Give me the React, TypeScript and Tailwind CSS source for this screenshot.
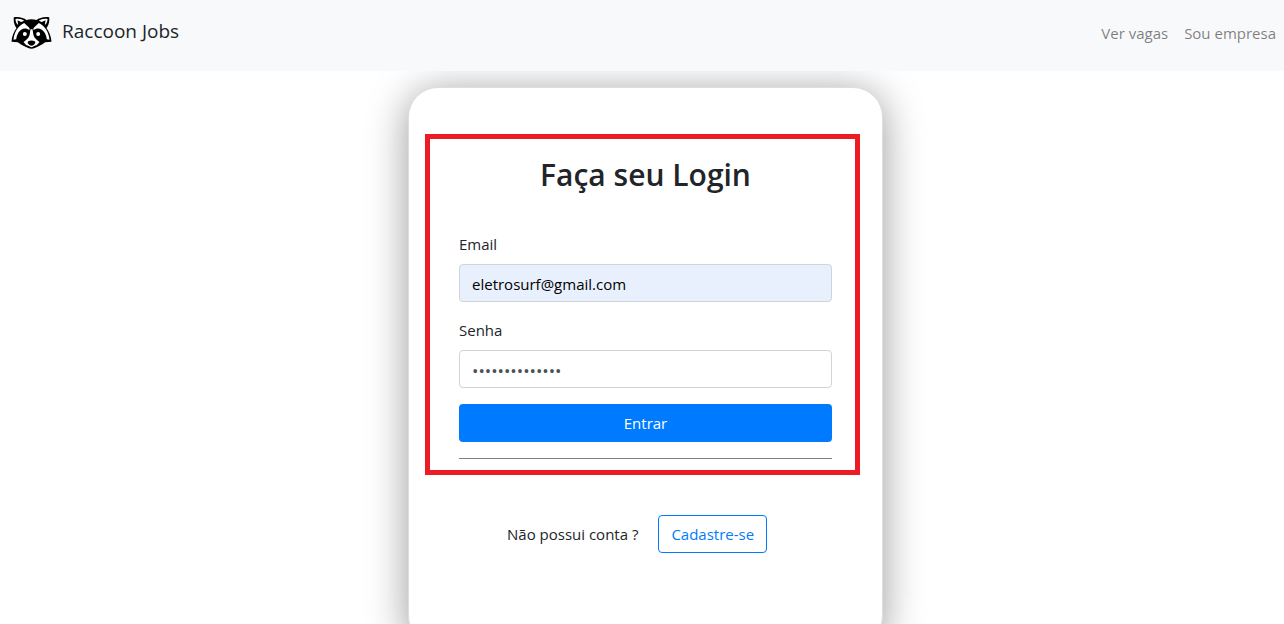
import React from 'react';

function RaccoonLogo() {
  return (
    <svg viewBox="0 0 120 99" className="h-[33px] w-[41px]" aria-hidden="true">
      <path d="M7 4 C22 1 37 6 45 12 Q60 8 75 12 C83 6 98 1 113 4 C115 18 110 30 105 36 C113 48 119 61 120 77 L101 79 C90 88 78 92 70 96 Q60 101 50 96 C42 92 30 88 19 79 L0 77 C1 61 7 48 15 36 C10 30 5 18 7 4Z" fill="#000" />
      <path d="M12 9 C23 7 32 10 38 14 L29 18 L18 13 L20 27 C14 22 12 16 12 9Z" fill="#fff" />
      <path d="M108 9 C97 7 88 10 82 14 L91 18 L102 13 L100 27 C106 22 108 16 108 9Z" fill="#fff" />
      <path d="M38 21 L54 36 L54 43 C43 32 27 38 20 51 Q15 60 14 70 L6 71 C8 48 20 29 38 21Z" fill="#fff" />
      <path d="M82 21 L66 36 L66 43 C77 32 93 38 100 51 Q105 60 106 70 L114 71 C112 48 100 29 82 21Z" fill="#fff" />
      <path d="M57 40 L63 40 L66 58 C69 68 78 73 84 78 Q79 87 68 90 Q60 97 52 90 Q41 87 36 78 C42 73 51 68 54 58Z" fill="#fff" />
      <path d="M50 76 Q60 71 70 76 Q74 82 66 87 Q60 91 54 87 Q46 82 50 76Z" fill="#000" />
      <circle cx="40" cy="54" r="6" fill="#fff" />
      <circle cx="80" cy="54" r="6" fill="#fff" />
    </svg>
  );
}

export default function App() {
  return (
    <div className="h-screen overflow-hidden bg-white font-['Open_Sans','Noto_Sans',sans-serif] text-[15px] leading-6 text-[#212529]">
      <header className="relative z-10 flex h-[71px] items-start justify-between bg-[#f8f9fa] px-2 pt-4">
        <a href="#inicio" className="flex items-start gap-2.5 pl-[3px] text-[19px] leading-[30px]">
          <RaccoonLogo />
          Raccoon Jobs
        </a>
        <nav className="flex gap-4 pt-[5px] text-black/50">
          <a href="#vagas">Ver vagas</a>
          <a href="#empresa">Sou empresa</a>
        </nav>
      </header>
      <main className="flex justify-center pl-[7px] pt-4">
        <div className="w-full max-w-[475px] rounded-[30px] border border-[#dedede] bg-white px-[50px] pb-[92px] pt-[46px] shadow-[0_5px_40px_rgba(0,0,0,0.4)]">
          <form className="relative pb-4 pt-[22px]" onSubmit={(e) => e.preventDefault()}>
            <h1 className="mb-[38px] text-center text-[30px] leading-[38px] font-semibold">Faça seu Login</h1>
            <label htmlFor="email" className="mb-2 block">Email</label>
            <input id="email" type="email" defaultValue="eletrosurf@gmail.com" className="mb-4 block h-[38px] w-full rounded-sm border border-[#ced4da] bg-[#e8f0fe] px-3 pt-[2px] text-black" />
            <label htmlFor="senha" className="mb-2 block">Senha</label>
            <input id="senha" type="password" defaultValue="raccoonjobs123" className="mb-4 block h-[38px] w-full rounded-sm border border-[#ced4da] bg-white px-3 pt-[2px] text-[17px] text-[#495057]" />
            <button type="submit" className="mb-4 block h-[38px] w-full rounded-sm bg-[#007bff] text-white">Entrar</button>
            <hr className="border-t border-[#808080]" />
            <div className="pointer-events-none absolute -left-[34px] -right-7 bottom-0 top-0 border-[5px] border-[#ed1c24]" />
          </form>
          <div className="mt-10 flex items-center gap-5 pl-12">
            <p>Não possui conta ?</p>
            <a href="#cadastro" className="flex h-[38px] items-center rounded-sm border border-[#007bff] px-3 text-[#007bff]">Cadastre-se</a>
          </div>
        </div>
      </main>
    </div>
  );
}
